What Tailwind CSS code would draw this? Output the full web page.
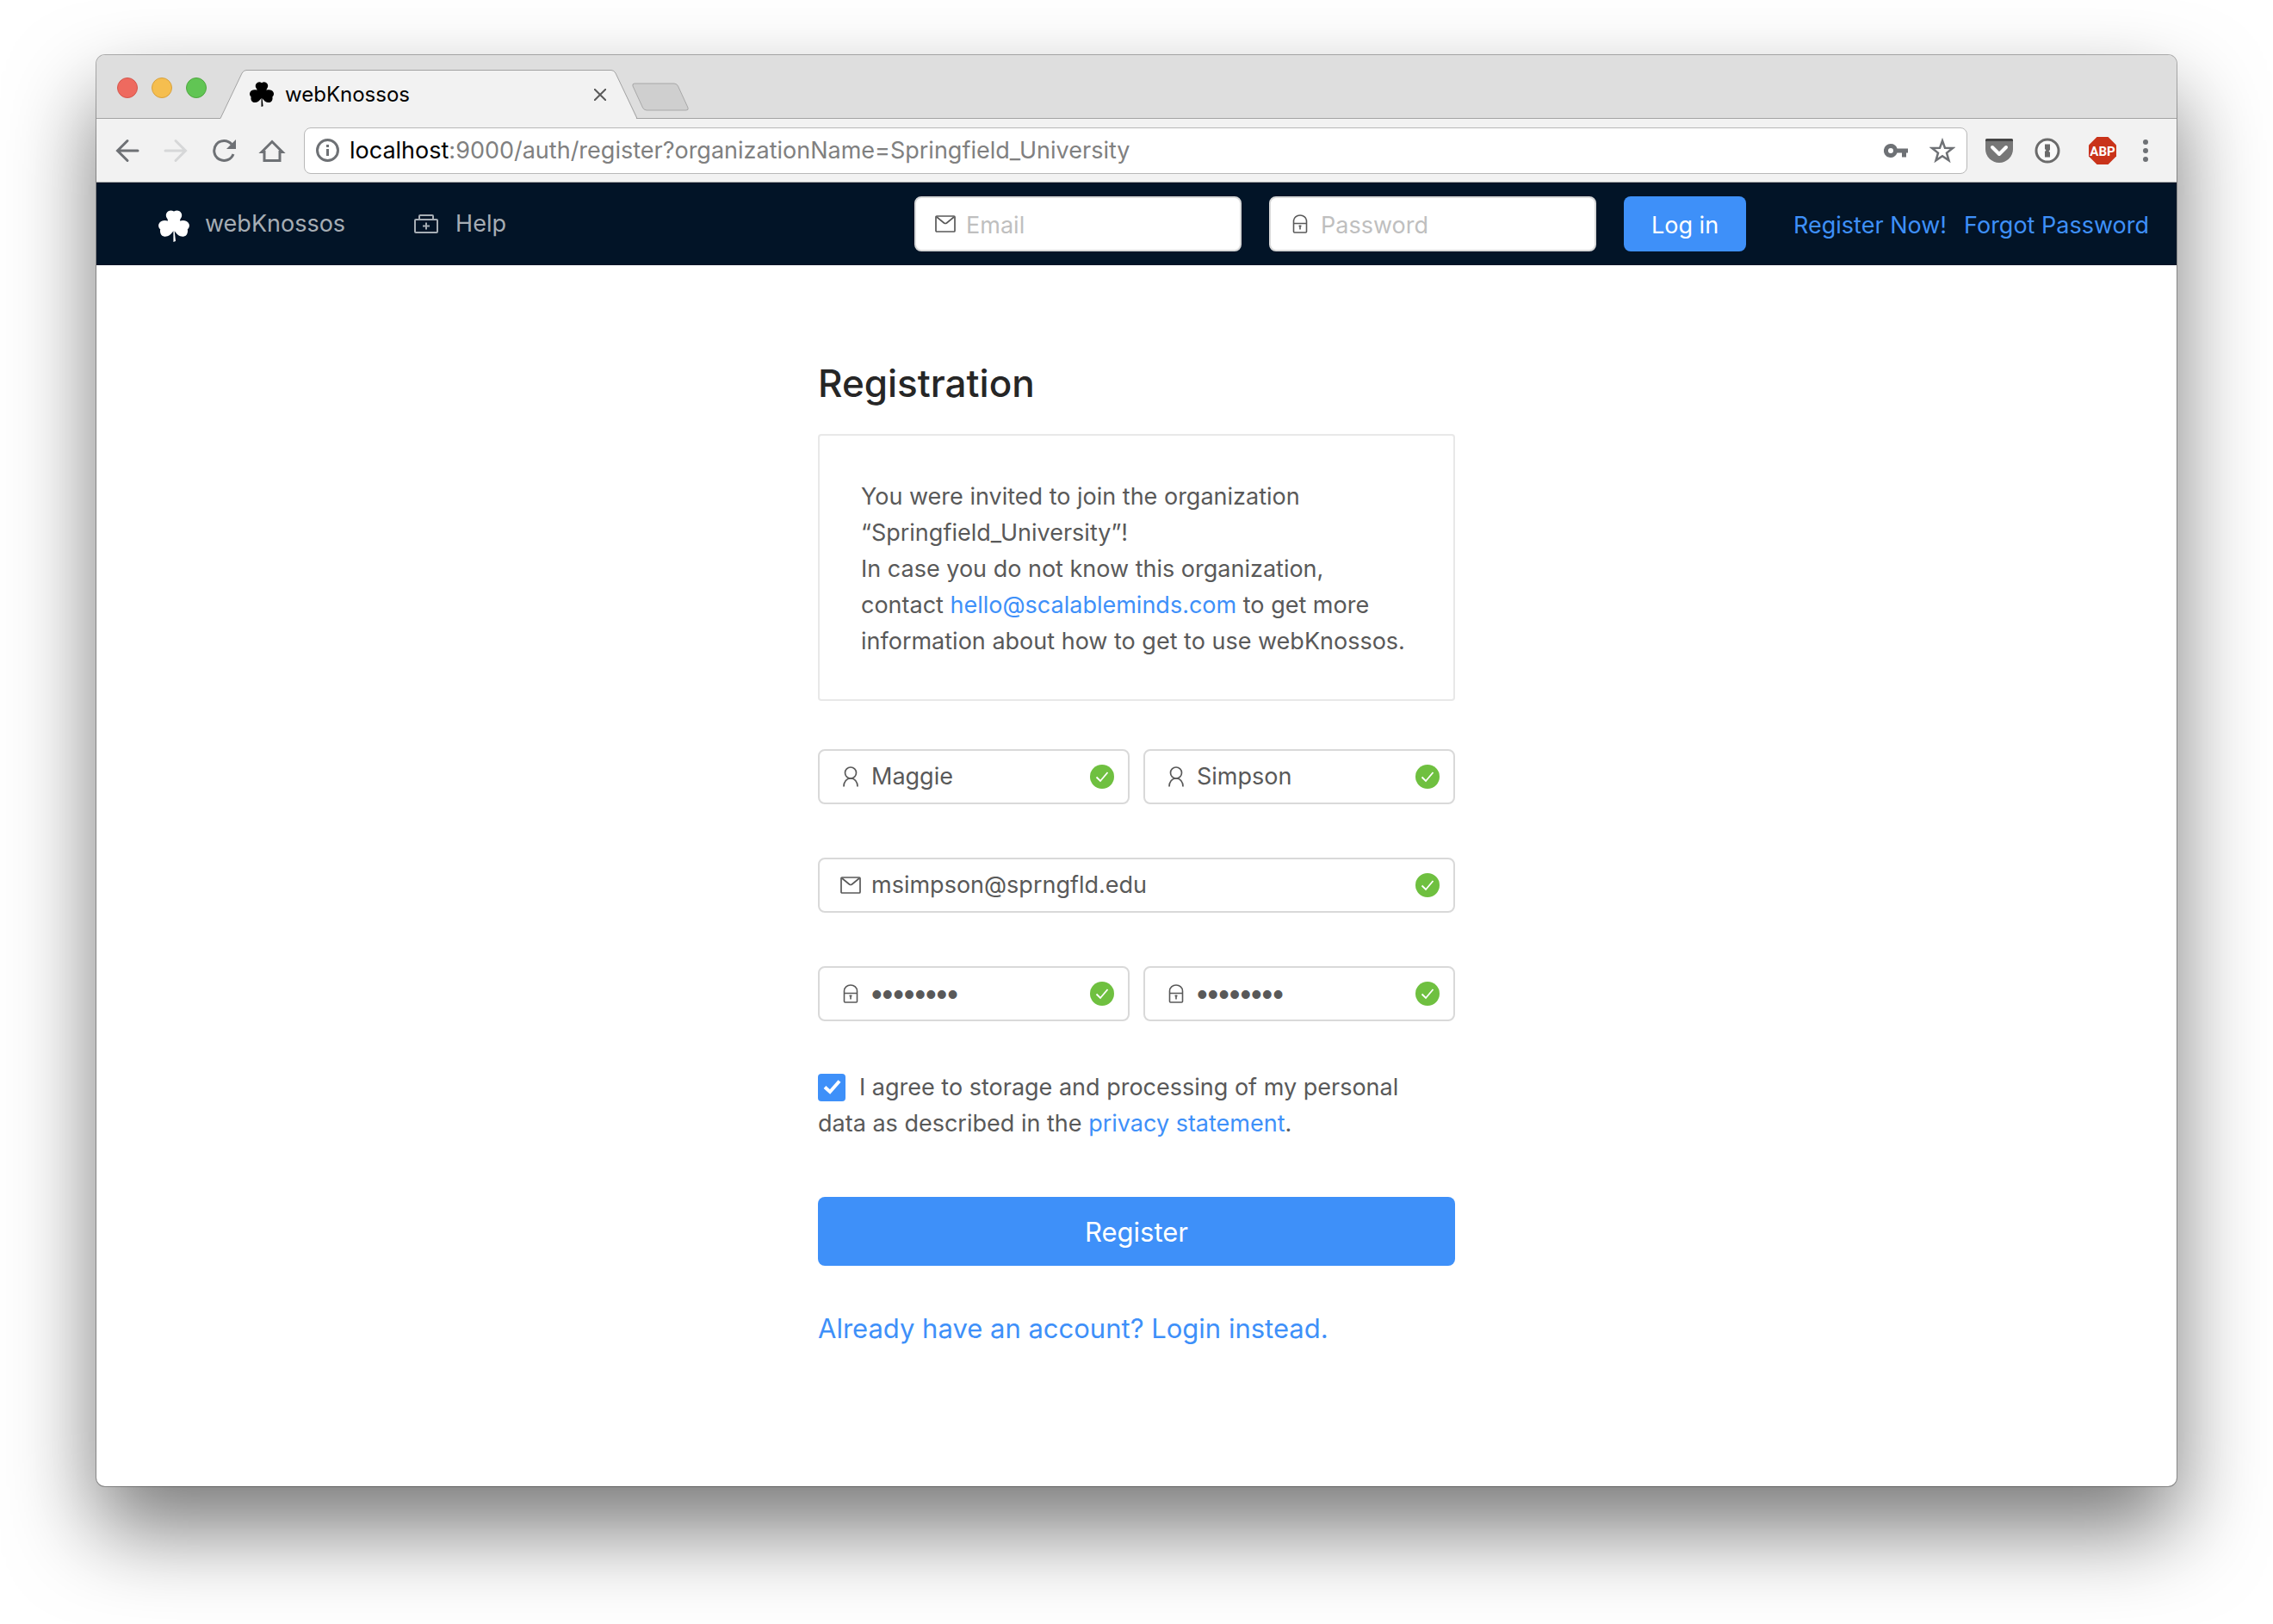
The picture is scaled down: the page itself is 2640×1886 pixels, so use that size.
<!DOCTYPE html>
<html lang="en">
<head>
<meta charset="utf-8">
<title>webKnossos</title>
<script src="https://cdn.jsdelivr.net/npm/@tailwindcss/browser@4"></script>
</head>
<body class="min-h-screen flex flex-col bg-white px-28 pt-16 pb-40 font-['Inter',sans-serif] text-[27px] leading-[42px] text-[#595959]">
<svg class="hidden" aria-hidden="true">
  <symbol id="clover" viewBox="0 0 36 37">
    <path d="M18 1.500C20 .2 22.500 0 24.500 1.200C27.800 3.300 27.800 7 26 9.500Q25 11 25 12.500C29.500 11 34 12.500 35.500 16C36.500 18.500 35.500 21 33.800 22.200C34.500 25.500 33.500 29.500 29.800 30.500C25.500 31.500 21.500 28.500 18.700 24.200L20 36L17.400 37L17.400 24.200C14.500 28.500 10.500 31.500 6.200 30.500C2.500 29.500 1.500 25.500 2.200 22.200C.5 21-.5 18.500 .5 16C2 12.500 6.500 11 11 12.500Q11 11 10 9.500C8.200 7 8.200 3.300 11.500 1.200C13.500 0 16 .2 18 1.500Z" fill="currentColor"/>
  </symbol>
  <symbol id="mail" viewBox="0 0 24 20"><g fill="none" stroke="currentColor" stroke-width="1.700"><rect x="1" y="1" width="22" height="18" rx="1"/><path d="M2 2L10.500 9Q12 10 13.500 9L22 2"/></g></symbol>
  <symbol id="lock" viewBox="0 0 24 24"><g fill="none" stroke="currentColor" stroke-width="1.600"><path d="M4.500 11.500H19.500V21Q19.500 22 18.500 22H5.500Q4.500 22 4.500 21ZM4.500 11.500V9C4.500 4.500 8 2 12 2S19.500 4.500 19.500 9V11.500"/><path d="M12 13.500V18.500M10.500 14.500H13.500"/></g></symbol>
  <symbol id="user" viewBox="0 0 24 24"><g fill="none" stroke="currentColor" stroke-width="1.700"><circle cx="12" cy="7.500" r="6.500"/><path d="M4 23.500C4 18 7 14 12 14S20 18 20 23.500"/></g></symbol>
  <symbol id="valid" viewBox="0 0 28 28"><circle cx="14" cy="14" r="14" fill="#6fc040"/><path d="M7.500 14.500L12 19L20.500 9" fill="none" stroke="#fff" stroke-width="1.800"/></symbol>
</svg>

<div class="flex-1 flex flex-col rounded-[10px] bg-white shadow-[0_0_0_1px_rgba(0,0,0,0.3),0_50px_100px_rgba(0,0,0,0.53)]">
  <!-- Tab strip -->
  <div class="flex h-[74px] items-end rounded-t-[10px] bg-[#dedede] border-b border-[#a3a3a3]">
    <div class="flex gap-4 self-center pl-6 pt-0.5">
      <span class="size-6 rounded-full bg-[#ee6a5f] border border-[#d5564c]"></span>
      <span class="size-6 rounded-full bg-[#f5be4f] border border-[#d8a13d]"></span>
      <span class="size-6 rounded-full bg-[#61c554] border border-[#4fa73f]"></span>
    </div>
    <div class="relative ml-4 -mb-px h-[57px] w-[484px] shrink-0">
      <svg class="absolute inset-0 size-full" viewBox="0 0 484 57"><path d="M0 57V56.500L25 4Q27 .5 30 .5H454Q457 .5 459 4L483 56.500V57Z" fill="#f2f2f2"/><path d="M0 56.500L25 4Q27 .5 30 .5H454Q457 .5 459 4L484 56.500" fill="none" stroke="#a3a3a3"/></svg>
      <div class="relative flex h-full items-center gap-3 pl-[33px] pr-9 text-[24px] text-black">
        <svg class="h-[29px] w-[30px]"><use href="#clover"/></svg>
        <span class="flex-1">webKnossos</span>
        <button aria-label="Close tab"><svg class="size-[14px]" viewBox="0 0 14 14" stroke="#5a5a5a" stroke-width="2"><path d="M0 0L14 14M14 0L0 14"/></svg></button>
      </div>
    </div>
    <button aria-label="New tab" class="-ml-1.5 mb-2"><svg class="h-[33px] w-[67px]" viewBox="0 0 67 33"><path d="M3 1H49Q52 1 53.500 4L65 29Q66 32 63 32H17Q14 32 12.500 29L1 4Q0 1 3 1Z" fill="#cfcfcf" stroke="#a8a8a8"/></svg></button>
  </div>

  <!-- Toolbar -->
  <div class="flex h-[74px] items-center bg-[#f2f2f2] border-b border-[#b0b0b0] pl-5 pr-[33px] text-[#6e7175]">
    <div class="flex gap-6 pr-[21px]">
      <button aria-label="Back"><svg class="size-8" viewBox="0 0 32 32" fill="none" stroke="currentColor" stroke-width="3" stroke-linecap="round"><path d="M28 16H5M16 4.500L4.500 16L16 27.500"/></svg></button>
      <button aria-label="Forward" class="text-[#d6d7d8]"><svg class="size-8" viewBox="0 0 32 32" fill="none" stroke="currentColor" stroke-width="3" stroke-linecap="round"><path d="M4 16H27M16 4.500L27.500 16L16 27.500"/></svg></button>
      <button aria-label="Reload"><svg class="size-8" viewBox="0 0 32 32"><path d="M25 8.500A11.500 11.500 0 1 0 27 20" fill="none" stroke="currentColor" stroke-width="3"/><path d="M30 3V14H19Z" fill="currentColor"/></svg></button>
      <button aria-label="Home"><svg class="size-8" viewBox="0 0 32 32" fill="none" stroke="currentColor" stroke-width="3"><path d="M4 17.500L16 5.500L28 17.500H25V27.500H7V17.500Z"/></svg></button>
    </div>
    <div class="flex h-[54px] flex-1 items-center rounded-lg border border-[#b8b8b8] bg-white px-[13px]">
      <svg class="size-[27px]" viewBox="0 0 27 27"><circle cx="13.500" cy="13.500" r="12" fill="none" stroke="currentColor" stroke-width="3"/><path d="M12 12h3v8h-3zM12 7h3v3h-3z" fill="currentColor"/></svg>
      <div role="textbox" aria-label="Address" class="flex-1 pl-3 text-[27px] text-[#808080]"><span class="text-black">localhost</span>:9000/auth/register?organizationName=Springfield_University</div>
      <svg class="h-4 w-7 mr-[25px]" viewBox="0 0 28 16"><path fill-rule="evenodd" d="M8 0A8 8 0 0 1 15.500 5.500H28V10.500H26V15.500H21V10.500H15.500A8 8 0 1 1 8 0ZM8 5A3 3 0 1 0 8 11A3 3 0 1 0 8 5Z" fill="currentColor"/></svg>
      <svg class="size-[30px]" viewBox="0 0 30 30"><path d="M15 3.500L18 11.800L27 12L20 17.600L22.500 26.300L15 21.300L7.500 26.300L10 17.600L3 12L12 11.800Z" fill="none" stroke="currentColor" stroke-width="2.500"/></svg>
    </div>
    <div class="flex items-center pl-[21px]">
      <svg class="h-7 w-8" viewBox="0 0 32 28"><path d="M2 0H30Q32 0 32 2V12A16 16 0 0 1 0 12V2Q0 0 2 0Z" fill="#777"/><path d="M0 3V2Q0 0 2 0H30Q32 0 32 2V3Z" fill="#444"/><path d="M8 10L16 18L24 10" fill="none" stroke="#fff" stroke-width="4" stroke-linecap="round" stroke-linejoin="round"/></svg>
      <svg class="ml-[25px] size-[30px]" viewBox="0 0 30 30"><circle cx="15" cy="15" r="13" fill="#fafafa" stroke="#6b6b6b" stroke-width="3"/><path d="M12 7.500H18V14L16.500 15.500L18 17V22.500H12V16L13.500 14.500L12 13Z" fill="#6b6b6b"/></svg>
      <svg class="ml-[33px] size-8" viewBox="0 0 32 32"><path d="M9.500 0H22.500L32 9.500V22.500L22.500 32H9.500L0 22.500V9.500Z" fill="#c9331a"/><text x="16" y="21.500" text-anchor="middle" font-family="Roboto" font-weight="700" font-size="15" fill="#fff">ABP</text></svg>
      <svg class="ml-[31px] h-[26px] w-[6px]" viewBox="0 0 6 26" fill="currentColor"><circle cx="3" cy="3" r="3"/><circle cx="3" cy="13" r="3"/><circle cx="3" cy="23" r="3"/></svg>
    </div>
  </div>

  <!-- Site navigation -->
  <nav class="flex h-24 items-center bg-[#021427] pl-[72px] pr-8 text-[#a6adb4]">
    <a href="#" class="flex items-center gap-[18px]"><svg class="mt-1 h-[37px] w-9 text-white"><use href="#clover"/></svg>webKnossos</a>
    <a href="#" class="ml-20 flex items-center gap-5"><svg class="h-[22px] w-7" viewBox="0 0 28 22" fill="none" stroke="currentColor" stroke-width="2"><rect x="1" y="6" width="26" height="15" rx="1"/><path d="M6 6V2Q6 1 7 1H21Q22 1 22 2V6M14 9.500V17.500M10 13.500H18"/></svg>Help</a>
    <form class="ml-auto flex items-center gap-8">
      <label class="flex h-16 w-[380px] items-center gap-3 rounded-lg border-2 border-[#d9d9d9] bg-white px-[22px] text-[#595959]">
        <svg class="h-5 w-6 shrink-0"><use href="#mail"/></svg><input type="email" aria-label="Email" placeholder="Email" class="min-w-0 flex-1 pt-1 outline-none placeholder:text-[#bfbfbf]">
      </label>
      <label class="flex h-16 w-[380px] items-center gap-3 rounded-lg border-2 border-[#d9d9d9] bg-white px-[22px] text-[#595959]">
        <svg class="size-6 shrink-0"><use href="#lock"/></svg><input type="password" aria-label="Password" placeholder="Password" class="min-w-0 flex-1 pt-1 outline-none placeholder:text-[#bfbfbf]">
      </label>
      <button class="h-16 w-[142px] rounded-lg bg-[#3e90f9] pt-1 text-white">Log in</button>
    </form>
    <div class="ml-[55px] flex gap-5 pt-1 text-[#3e90f9]"><a href="#">Register Now!</a><a href="#">Forgot Password</a></div>
  </nav>

  <!-- Registration form -->
  <main class="mx-auto w-full max-w-[740px] pt-[107px] pb-20">
    <h1 class="text-[44px] leading-[60px] font-medium text-[#262626]">Registration</h1>
    <div class="mt-[29px] rounded-[4px] border-2 border-[#e8e8e8] px-12 pt-[50px] pb-[46px]">
      You were invited to join the organization<br>“Springfield_University”!<br>In case you do not know this organization,<br>contact <a href="#" class="text-[#3e90f9]">hello@scalableminds.com</a> to get more<br>information about how to get to use webKnossos.
    </div>
    <form class="mt-14">
      <div class="grid grid-cols-2 gap-x-4 gap-y-[62px]">
        <label class="flex h-16 items-center gap-3 rounded-lg border-2 border-[#d9d9d9] pl-6 pr-4">
          <svg class="size-6 shrink-0"><use href="#user"/></svg><input type="text" aria-label="First name" value="Maggie" class="min-w-0 flex-1 outline-none"><svg class="size-7 shrink-0"><use href="#valid"/></svg>
        </label>
        <label class="flex h-16 items-center gap-3 rounded-lg border-2 border-[#d9d9d9] pl-6 pr-4">
          <svg class="size-6 shrink-0"><use href="#user"/></svg><input type="text" aria-label="Last name" value="Simpson" class="min-w-0 flex-1 outline-none"><svg class="size-7 shrink-0"><use href="#valid"/></svg>
        </label>
        <label class="col-span-2 flex h-16 items-center gap-3 rounded-lg border-2 border-[#d9d9d9] pl-6 pr-4">
          <svg class="h-5 w-6 shrink-0"><use href="#mail"/></svg><input type="email" aria-label="Email" value="msimpson@sprngfld.edu" class="min-w-0 flex-1 outline-none"><svg class="size-7 shrink-0"><use href="#valid"/></svg>
        </label>
        <label class="flex h-16 items-center gap-3 rounded-lg border-2 border-[#d9d9d9] pl-6 pr-4">
          <svg class="size-6 shrink-0"><use href="#lock"/></svg><input type="password" aria-label="Password" value="password" class="min-w-0 flex-1 pt-0.5 font-['Liberation_Sans',sans-serif] text-[36px] outline-none"><svg class="size-7 shrink-0"><use href="#valid"/></svg>
        </label>
        <label class="flex h-16 items-center gap-3 rounded-lg border-2 border-[#d9d9d9] pl-6 pr-4">
          <svg class="size-6 shrink-0"><use href="#lock"/></svg><input type="password" aria-label="Confirm password" value="password" class="min-w-0 flex-1 pt-0.5 font-['Liberation_Sans',sans-serif] text-[36px] outline-none"><svg class="size-7 shrink-0"><use href="#valid"/></svg>
        </label>
      </div>
      <label class="mt-14 block"><span class="relative mr-4 inline-block size-8 align-[-7px]"><input type="checkbox" checked class="block size-8 appearance-none rounded-[4px] bg-[#3e90f9]"><svg class="absolute inset-0 size-8" viewBox="0 0 32 32"><path d="M8 15.500L14 21L25 8.500" fill="none" stroke="#fff" stroke-width="4"/></svg></span>I agree to storage and processing of my personal<br>data as described in the <a href="#" class="text-[#3e90f9]">privacy statement</a>.</label>
      <button class="mt-16 block h-20 w-full rounded-lg bg-[#3e90f9] pt-0.5 text-[31px] text-white">Register</button>
      <a href="#" class="mt-[52px] block text-[31px] text-[#3e90f9]">Already have an account? Login instead.</a>
    </form>
  </main>
</div>
</body>
</html>
